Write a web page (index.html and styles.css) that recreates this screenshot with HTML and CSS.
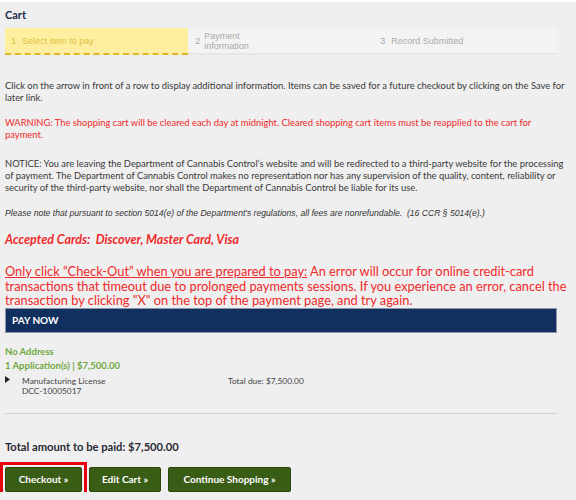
FILE: index.html
```html
<!DOCTYPE html>
<html>
<head>
<meta charset="utf-8">
<link rel="stylesheet" href="styles.css">
</head>
<body>
<div class="page">
  <h1 class="title">Cart</h1>
  <div class="stepper">
    <div class="step step-active"><span class="num">1</span><span>Select item to pay</span></div>
    <div class="step step-two"><span class="num">2</span><span class="two-line">Payment<br>information</span></div>
    <div class="step step-three"><span class="num">3</span><span>Record Submitted</span></div>
  </div>

  <p class="info">Click on the arrow in front of a row to display additional information. Items can be saved for a future checkout by clicking on the Save for later link.</p>
  <p class="info warn">WARNING: The shopping cart will be cleared each day at midnight. Cleared shopping cart items must be reapplied to the cart for payment.</p>
  <p class="info notice">NOTICE: You are leaving the Department of Cannabis Control’s website and will be redirected to a third-party website for the processing of payment. The Department of Cannabis Control makes no representation nor has any supervision of the quality, content, reliability or security of the third-party website, nor shall the Department of Cannabis Control be liable for its use.</p>
  <p class="note">Please note that pursuant to section 5014(e) of the Department's regulations, all fees are nonrefundable.&nbsp; (16 CCR § 5014(e).)</p>
  <p class="cards">Accepted Cards:&nbsp; Discover, Master Card, Visa</p>
  <p class="alert"><u>Only click “Check-Out” when you are prepared to pay:</u> An error will occur for online credit-card transactions that timeout due to prolonged payments sessions. If you experience an error, cancel the transaction by clicking "X" on the top of the payment page, and try again.</p>

  <div class="paynow">PAY NOW</div>
  <div class="group">
    <div class="addr">No Address</div>
    <div class="apps">1 Application(s) | $7,500.00</div>
    <div class="row">
      <svg class="arrow" width="5" height="7" viewBox="0 0 5 7"><polygon points="0,0 5,3.5 0,7" fill="#222"/></svg>
      <div class="item">
        <div>Manufacturing License</div>
        <div>DCC-10005017</div>
      </div>
      <div class="due">Total due: $7,500.00</div>
    </div>
  </div>
  <div class="rule"></div>
  <div class="total">Total amount to be paid: $7,500.00</div>
  <div class="buttons">
    <span class="highlight"><button class="btn btn-checkout">Checkout »</button></span>
    <button class="btn btn-edit">Edit Cart »</button>
    <button class="btn btn-continue">Continue Shopping »</button>
  </div>
</div>
</body>
</html>
```

FILE: styles.css
```css
html, body {
  margin: 0;
  padding: 0;
  background: #efefef;
}
body {
  border-top: 2px solid #ffffff;
  font-family: Lato, "Open Sans", sans-serif;
  color: #333;
}
.page {
  padding: 0 5px;
  width: 566px;
}
.title {
  margin: 0;
  padding-top: 6px;
  height: 20px;
  font-size: 11px;
  line-height: 13px;
  font-weight: 700;
  color: #1e2d4f;
}
.stepper {
  display: flex;
  width: 552px;
  height: 25px;
  background: #f3f3f3;
  border-bottom: 2px solid #e6e6e6;
  font-family: "Liberation Sans", Arial, sans-serif;
  font-size: 9px;
  color: #aaa;
}
.step {
  display: flex;
  align-items: center;
  gap: 6px;
}
.step-active {
  width: 177px;
  padding-left: 6px;
  background: #fdef9f;
  color: #e0c03e;
  border-bottom: 2px dashed #dfb52a;
  margin-bottom: -2px;
}
.step-two {
  width: 185px;
  padding-left: 7px;
  gap: 4px;
}
.two-line {
  font-size: 9px;
  line-height: 10px;
}
.step-three {
  padding-left: 0;
}
.num { font-size: 9.5px; }
p { margin: 0; }
.info {
  font-size: 9.4px;
  line-height: 12px;
  color: #3a3a3a;
  margin-top: 25px;
}
.warn {
  color: #ee2b2b;
  margin-top: 13px;
}
.notice {
  margin-top: 17px;
}
.note {
  margin-top: 13px;
  font-family: "Liberation Sans", Arial, sans-serif;
  font-style: italic;
  font-size: 8.6px;
  line-height: 12px;
  color: #333;
}
.cards {
  margin-top: 14px;
  font-size: 12.5px;
  line-height: 14px;
  font-style: italic;
  font-weight: 700;
  color: #f02a2a;
}
.alert {
  margin-top: 17px;
  font-size: 12.8px;
  line-height: 14.5px;
  color: #f02a2a;
}
.paynow {
  margin-top: 0;
  width: 544px;
  height: 23px;
  line-height: 23px;
  padding-left: 6px;
  background: #12305f;
  border: 1px solid #8a96aa;
  color: #ffffff;
  font-weight: 700;
  font-size: 10px;
}
.group {
  padding-top: 12px;
  height: 68px;
}
.addr, .apps {
  color: #6fa83f;
  font-size: 9.5px;
  line-height: 14px;
  font-weight: 700;
}
.row {
  display: flex;
  font-size: 8.4px;
  line-height: 10.5px;
  color: #444;
  margin-top: 3px;
}
.arrow {
  margin-top: 0;
  flex: none;
}
.item {
  width: 206px;
  padding-left: 12px;
}
.rule {
  width: 552px;
  height: 1px;
  background: #d2d2d2;
}
.total {
  margin-top: 27px;
  font-size: 11.2px;
  line-height: 12px;
  font-weight: 700;
  color: #2a2a35;
}
.buttons {
  display: flex;
  gap: 7px;
  margin-top: 14px;
}
.highlight {
  display: flex;
  margin: -5px;
  padding: 2px;
  border: 3px solid #e8000e;
}
.btn {
  height: 25px;
  padding: 0;
  background: #3a5d16;
  border: 1px solid #2b460d;
  border-radius: 2px;
  color: #ffffff;
  font-family: Lato, "Open Sans", sans-serif;
  font-weight: 700;
  font-size: 10px;
}
.btn-checkout { width: 77px; }
.btn-edit { width: 72px; }
.btn-continue { width: 123px; }
```
